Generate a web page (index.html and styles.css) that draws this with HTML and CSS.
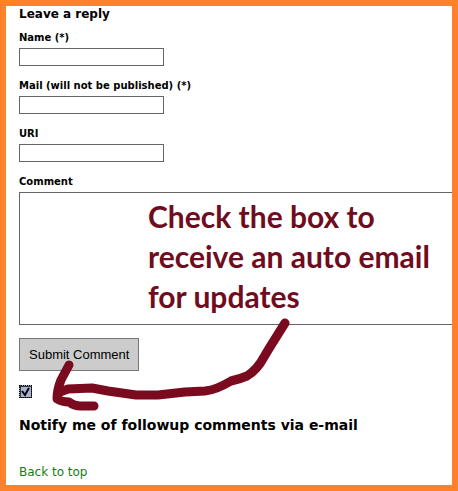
FILE: index.html
```html
<!DOCTYPE html>
<html lang="en">
<head>
    <meta charset="UTF-8">
    <meta name="viewport" content="width=device-width, initial-scale=1.0">
    <title>Leave a reply</title>
    <link rel="stylesheet" href="styles.css">
</head>
<body>
    <div class="container">
        <h3 class="title">Leave a reply</h3>

        <form id="commentForm">
            <div class="form-group">
                <label for="name">Name (*)</label>
                <input type="text" id="name">
            </div>

            <div class="form-group">
                <label for="mail">Mail (will not be published) (*)</label>
                <input type="text" id="mail">
            </div>

            <div class="form-group">
                <label for="uri">URI</label>
                <input type="text" id="uri">
            </div>

            <div class="form-group comment-group">
                <label for="comment">Comment</label>
                <textarea id="comment"></textarea>
                <p class="note">Check the box to<br>receive an auto email<br>for updates</p>
                <svg class="arrow" width="240" height="100" viewBox="50 315 240 100">
                    <path d="M285 323 L275 339 Q268 350 264 357 Q257 370 247 376 Q240 379 231 381 Q216 390 205 391 L185 392 L158 395 L136 395 L108 391 L92 388 L68 389 L60 392"/>
                    <path d="M69 365 L61 380 Q57 390 57 399 Q62 402 69 402 Q74 406 81 406 L94 406"/>
                </svg>
            </div>

            <button type="submit">Submit Comment</button>

            <div class="notify">
                <input type="checkbox" id="notify" checked>
                <label for="notify">Notify me of followup comments via e-mail</label>
            </div>
        </form>

        <a class="back" href="#">Back to top</a>
    </div>
</body>
</html>
```
FILE: styles.css
```css
* {
    box-sizing: border-box;
}

body {
    font-family: "DejaVu Sans", Verdana, sans-serif;
    font-size: 12px;
    color: #000;
    background: #ff8129;
    margin: 0;
    padding: 6px;
}

.container {
    background: #fff;
    padding: 0 0 3px 13px;
    overflow: hidden;
}

.title {
    font-size: 12px;
    line-height: 16px;
    margin: 0 0 9px;
}

.form-group {
    margin-bottom: 13px;
}

.form-group label {
    display: block;
    font-size: 10px;
    font-weight: bold;
    line-height: 14px;
    margin-bottom: 3px;
}

input[type="text"] {
    display: block;
    width: 145px;
    height: 18px;
    padding: 1px 2px;
    border: 1px solid #666;
    background: #fff;
}

/* the comment box runs on past the right edge */
textarea {
    display: block;
    width: calc(100% + 10px);
    height: 133px;
    border: 1px solid #666;
    background: #fff;
    resize: none;
}

.comment-group {
    position: relative;
}

.note {
    position: absolute;
    top: 21px;
    left: 129px;
    margin: 0;
    font-family: Lato, Calibri, sans-serif;
    font-size: 30px;
    font-weight: bold;
    line-height: 40px;
    color: #6f0c1e;
    white-space: nowrap;
    pointer-events: none;
}

.arrow {
    position: absolute;
    top: 140px;
    left: 31px;
    fill: none;
    stroke: #7a0a1e;
    stroke-width: 9;
    stroke-linecap: round;
    stroke-linejoin: round;
    pointer-events: none;
}

button {
    display: block;
    height: 33px;
    padding: 0 9px;
    border: 1px solid #777;
    background: #ccc;
    color: #000;
    font-family: "Liberation Sans", Arial, sans-serif;
    font-size: 13px;
}

.notify {
    margin-top: 14px;
}

.notify input {
    appearance: none;
    display: block;
    width: 13px;
    height: 13px;
    margin: 0 0 17px;
    border: 1px dotted #000;
    background: #a9b4c8;
}

.notify input:checked {
    background: #a9b4c8 url("data:image/svg+xml,%3Csvg xmlns='http://www.w3.org/2000/svg' viewBox='0 0 11 11'%3E%3Cpath d='M0 11V0H11' fill='none' stroke='%23334' stroke-width='2'/%3E%3Cpath d='M2 5L5 9L9 2' fill='none' stroke='%23001' stroke-width='2'/%3E%3C/svg%3E");
}

.notify label {
    display: block;
    font-size: 14px;
    font-weight: bold;
    line-height: 20px;
}

.back {
    display: inline-block;
    margin-top: 27px;
    font-size: 12px;
    line-height: 20px;
    color: #118011;
    text-decoration: none;
}
```
